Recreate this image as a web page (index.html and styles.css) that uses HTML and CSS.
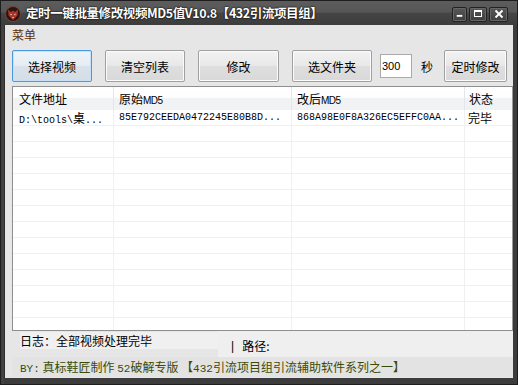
FILE: index.html
```html
<!DOCTYPE html>
<html>
<head>
<meta charset="utf-8">
<link rel="stylesheet" href="styles.css">
</head>
<body>
<div class="window">
  <div class="titlebar">
    <svg class="app-icon" width="16" height="16" viewBox="0 0 16 16">
      <circle cx="8" cy="8" r="7.5" fill="#2e1410" stroke="#6a4a3a" stroke-width="1"/>
      <path d="M3 3.5 L6 6 L8 4.5 L10 6 L13 3.5 L12.5 9.5 L8 14 L3.5 9.5 Z" fill="#a8342a"/>
      <path d="M5 7.5 L7 8.5 L6 9.5 Z M11 7.5 L9 8.5 L10 9.5 Z" fill="#f4d8c8"/>
      <path d="M7 11 L8 12.5 L9 11 Z" fill="#f4d8c8"/>
    </svg>
    <span class="title">定时一键批量修改视频MD5值V10.8【432引流项目组】</span>
    <div class="caption-btns">
      <div class="cap cap-min">
        <svg width="14" height="14" viewBox="0 0 14 14"><rect x="4" y="8" width="6" height="2" fill="#fff"/></svg>
      </div>
      <div class="cap cap-max">
        <svg width="16" height="14" viewBox="0 0 16 14"><rect x="4.5" y="3.5" width="7" height="6" fill="none" stroke="#fff" stroke-width="1"/><rect x="4" y="3" width="8" height="2" fill="#fff"/></svg>
      </div>
      <div class="cap cap-close">
        <svg width="16" height="14" viewBox="0 0 16 14"><path d="M4.5 3.5 L11.5 10.5 M11.5 3.5 L4.5 10.5" stroke="#fff" stroke-width="1.8"/></svg>
      </div>
    </div>
  </div>
  <div class="client">
    <div class="menubar"><span class="menu">菜单</span></div>
    <div class="toolbar">
      <button class="btn btn-default w80">选择视频</button>
      <button class="btn w80">清空列表</button>
      <button class="btn w81">修改</button>
      <button class="btn w80 last80">选文件夹</button>
      <input class="secs" type="text" value="300">
      <span class="unit">秒</span>
      <button class="btn w63">定时修改</button>
    </div>
    <div class="listview">
      <div class="lv-header">
        <div class="hcell">文件地址</div>
        <div class="hcell">原始<span class="md5">MD5</span></div>
        <div class="hcell">改后<span class="md5">MD5</span></div>
        <div class="hcell">状态</div>
      </div>
      <div class="lv-body">
        <div class="row">
          <div class="cell mono">D:\tools\<span class="cjk">桌</span>...</div>
          <div class="cell mono">85E792CEEDA0472245E80B8D...</div>
          <div class="cell mono">868A98E0F8A326EC5EFFC0AA...</div>
          <div class="cell">完毕</div>
        </div>
        <div class="row"><div class="cell"></div><div class="cell"></div><div class="cell"></div><div class="cell"></div></div>
        <div class="row"><div class="cell"></div><div class="cell"></div><div class="cell"></div><div class="cell"></div></div>
        <div class="row"><div class="cell"></div><div class="cell"></div><div class="cell"></div><div class="cell"></div></div>
        <div class="row"><div class="cell"></div><div class="cell"></div><div class="cell"></div><div class="cell"></div></div>
        <div class="row"><div class="cell"></div><div class="cell"></div><div class="cell"></div><div class="cell"></div></div>
        <div class="row"><div class="cell"></div><div class="cell"></div><div class="cell"></div><div class="cell"></div></div>
        <div class="row"><div class="cell"></div><div class="cell"></div><div class="cell"></div><div class="cell"></div></div>
        <div class="row"><div class="cell"></div><div class="cell"></div><div class="cell"></div><div class="cell"></div></div>
        <div class="row"><div class="cell"></div><div class="cell"></div><div class="cell"></div><div class="cell"></div></div>
        <div class="row"><div class="cell"></div><div class="cell"></div><div class="cell"></div><div class="cell"></div></div>
        <div class="row"><div class="cell"></div><div class="cell"></div><div class="cell"></div><div class="cell"></div></div>
        <div class="row"><div class="cell"></div><div class="cell"></div><div class="cell"></div><div class="cell"></div></div>
        <div class="row"><div class="cell"></div><div class="cell"></div><div class="cell"></div><div class="cell"></div></div>
      </div>
    </div>
    <div class="status">
      <div class="log">日志：全部视频处理完毕</div>
      <div class="path"><span class="bar">|</span><span>路径:</span></div>
    </div>
    <div class="footer"><span class="mono">BY:</span> 真标鞋匠制作 <span class="mono">52</span>破解专版 【<span class="mono">432</span>引流项目组引流辅助软件系列之一】</div>
  </div>
</div>
</body>
</html>
```

FILE: styles.css
```css
html, body {
  margin: 0;
  padding: 0;
}
body {
  width: 518px;
  height: 385px;
  overflow: hidden;
  font-family: "Noto Sans CJK SC", "Liberation Sans", sans-serif;
  font-size: 12px;
  color: #000;
}
.window {
  width: 518px;
  height: 385px;
  box-sizing: border-box;
  border: 1px solid #1e1e1e;
  background: linear-gradient(90deg, #3a3a3a, #474747 2px, #3c3c3c 3px);
  padding: 0 4px 6px 3px;
  display: flex;
  flex-direction: column;
}
.titlebar {
  height: 24px;
  margin: 0 -4px 0 -3px;
  display: flex;
  align-items: center;
  background: linear-gradient(#5c5c5c 0%, #575757 45%, #454545 52%, #3c3c3c 100%);
  padding: 0 9px 0 4px;
  flex-shrink: 0;
}
.app-icon {
  flex-shrink: 0;
  margin-top: 1px;
}
.title {
  margin-left: 5px;
  color: #fff;
  font-weight: bold;
  font-size: 12.5px;
  line-height: 24px;
  letter-spacing: -0.4px;
  text-shadow: 0 0 2px #000, 0 0 1px #000;
  white-space: nowrap;
  flex: 1;
}
.caption-btns {
  display: flex;
  gap: 2px;
  align-items: center;
  margin-top: 2px;
}
.cap {
  height: 15px;
  box-sizing: border-box;
  border: 1px solid #222;
  border-radius: 2px;
  box-shadow: inset 0 0 0 1px #666;
  background: linear-gradient(#585858, #3e3e3e);
  display: flex;
  align-items: center;
  justify-content: center;
}
.cap svg { display: block; }
.cap-min { width: 15px; }
.cap-max { width: 18px; }
.cap-close { width: 19px; }

.client {
  flex: 1;
  background: #e6e6e6;
  padding-left: 8px;
  display: flex;
  flex-direction: column;
  box-shadow: inset 1px 0 0 #2c2c2c;
}
.menubar {
  height: 20px;
  line-height: 20px;
}
.menu {
  color: #5e3208;
  font-size: 12px;
}
.toolbar {
  margin-top: 5px;
  height: 32px;
  display: flex;
  align-items: center;
}
.btn {
  height: 32px;
  box-sizing: border-box;
  border: 1px solid #a0a0a0;
  border-radius: 2px;
  background: linear-gradient(#f2f2f2, #e8e8e8 50%, #dedede 51%, #d9d9d9);
  box-shadow: inset 0 0 0 1px #fbfbfb;
  font-family: "Noto Sans CJK SC", sans-serif;
  font-size: 12px;
  color: #000;
  padding: 0;
  margin: 0 13px 0 0;
}
.btn-default {
  border-color: #4a9ae0;
  box-shadow: inset 0 0 0 1px #c4e2fb;
  background: linear-gradient(#eef4f9, #e4ecf2 50%, #d9e2ea 51%, #d4dee6);
}
.w80 { width: 80px; }
.w81 { width: 81px; }
.w63 { width: 63px; margin-right: 0; }
.last80 { margin-right: 8px; }
.secs {
  width: 32px;
  height: 24px;
  box-sizing: border-box;
  border: 1px solid #a9a9a9;
  background: #fff;
  font-family: "Liberation Sans", sans-serif;
  font-size: 11px;
  padding: 0 0 0 1px;
  margin: 0 9px 0 0;
  outline: none;
}
.unit {
  width: 12px;
  margin-right: 11px;
  font-size: 12px;
}

.listview {
  margin-top: 4px;
  height: 245px;
  box-sizing: border-box;
  border: 1px solid #8e8f8f;
  border-right-color: #9a9a9a;
  background: #fff;
  overflow: hidden;
}
.lv-header {
  height: 23px;
  display: grid;
  grid-template-columns: 101px 178px 173px 47px;
  background: linear-gradient(#ffffff 0%, #fdfdfd 45%, #f1f2f4 50%, #f1f2f4 100%);
}
.hcell {
  box-sizing: border-box;
  border-right: 1px solid #e3e6ea;
  padding-left: 5px;
  line-height: 23px;
  font-size: 12px;
  white-space: nowrap;
  overflow: hidden;
}
.hcell:first-child { padding-left: 6px; }
.hcell:last-child { border-right: none; padding-left: 4px; }
.md5 {
  font-family: "Liberation Sans", sans-serif;
  font-size: 10px;
  letter-spacing: -0.5px;
}
.row {
  height: 16px;
  box-sizing: border-box;
  display: grid;
  grid-template-columns: 101px 178px 173px 47px;
  border-bottom: 1px solid #f0f0f0;
}
.cell {
  box-sizing: border-box;
  border-right: 1px solid #f0f0f0;
  padding-left: 5px;
  line-height: 15px;
  white-space: nowrap;
  overflow: hidden;
  font-size: 12px;
}
.row .cell:first-child { padding-left: 6px; }
.row .cell:last-child { border-right: none; padding-left: 3px; }
.mono {
  font-family: "Liberation Mono", monospace;
  font-size: 10px;
}
.cjk {
  font-family: "Noto Sans CJK SC", sans-serif;
  font-size: 12px;
}

.status {
  height: 26px;
  display: flex;
}
.log {
  margin: 1px 0 0 8px;
  width: 198px;
  height: 17px;
  line-height: 17px;
  background: #f0f0f0;
  font-size: 12px;
}
.path {
  flex: 1;
  background: #efefef;
  padding: 8px 0 0 13px;
  line-height: 14px;
  display: flex;
  gap: 8px;
}
.bar {
  font-family: "Liberation Sans", sans-serif;
}
.footer {
  height: 20px;
  line-height: 19px;
  padding-left: 8px;
  color: #3b4a06;
  font-size: 12px;
  white-space: nowrap;
  background: #e3e3e3;
}
.footer .mono {
  font-size: 11px;
}
```
